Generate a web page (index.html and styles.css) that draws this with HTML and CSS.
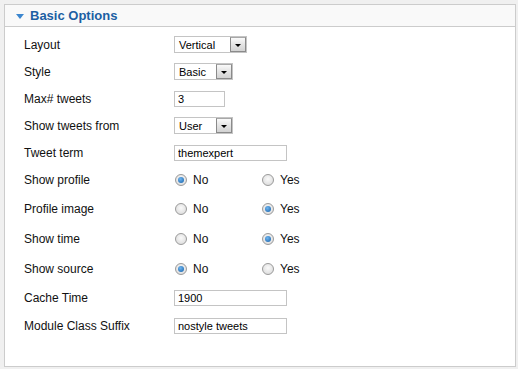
FILE: index.html
```html
<!DOCTYPE html>
<html>
<head>
<meta name="viewport" content="width=device-width, initial-scale=1">
<link rel="stylesheet" href="styles.css">
</head>
<body>

<div class="panel">
  <div class="panel-head">
    <span class="toggle"></span>
    <h3>Basic Options</h3>
  </div>

  <div class="options">
    <div class="row">
      <label>Layout</label>
      <div class="select w73"><span>Vertical</span><span class="btn"></span></div>
    </div>
    <div class="row">
      <label>Style</label>
      <div class="select w59"><span>Basic</span><span class="btn"></span></div>
    </div>
    <div class="row">
      <label>Max# tweets</label>
      <input type="text" class="short" value="3">
    </div>
    <div class="row">
      <label>Show tweets from</label>
      <div class="select w59"><span>User</span><span class="btn"></span></div>
    </div>
    <div class="row">
      <label>Tweet term</label>
      <input type="text" value="themexpert">
    </div>
    <div class="row radios first">
      <label>Show profile</label>
      <span class="radio checked"></span><span class="opt">No</span>
      <span class="radio"></span><span class="opt">Yes</span>
    </div>
    <div class="row radios">
      <label>Profile image</label>
      <span class="radio"></span><span class="opt">No</span>
      <span class="radio checked"></span><span class="opt">Yes</span>
    </div>
    <div class="row radios">
      <label>Show time</label>
      <span class="radio"></span><span class="opt">No</span>
      <span class="radio checked"></span><span class="opt">Yes</span>
    </div>
    <div class="row radios">
      <label>Show source</label>
      <span class="radio checked"></span><span class="opt">No</span>
      <span class="radio"></span><span class="opt">Yes</span>
    </div>
    <div class="row after-radios">
      <label>Cache Time</label>
      <input type="text" value="1900">
    </div>
    <div class="row">
      <label>Module Class Suffix</label>
      <input type="text" value="nostyle tweets">
    </div>
  </div>
</div>

</body>
</html>
```

FILE: styles.css
```css
body {
  margin: 0;
  padding: 4px 2px 2px 4px;
  background: #f0f0f0;
  font-family: "Liberation Sans", Arial, sans-serif;
}

.panel {
  background: #fff;
  border: 1px solid #ccc;
  height: 363px;
  box-sizing: border-box;
}

.panel-head {
  display: flex;
  align-items: center;
  height: 21px;
  background: #f9f9f9;
  border-bottom: 1px solid #ccc;
  padding-left: 11px;
}

.toggle {
  width: 0;
  height: 0;
  border-left: 4px solid transparent;
  border-right: 4px solid transparent;
  border-top: 5px solid #3b86cf;
  margin-right: 6px;
  margin-top: 1px;
}

.panel-head h3 {
  margin: 0;
  font-size: 13px;
  font-weight: bold;
  color: #1c5fa3;
}

.options {
  padding: 4px 0 0 19px;
}

.row {
  display: flex;
  align-items: center;
  height: 27px;
  font-size: 12px;
  color: #111;
}

.row.radios {
  height: 30px;
}

.row.radios.first {
  height: 28px;
}

.row.after-radios {
  height: 28px;
}

.row label {
  width: 150px;
  flex: none;
}

.select {
  display: flex;
  align-items: center;
  justify-content: space-between;
  height: 17px;
  box-sizing: border-box;
  border: 1px solid #c4c4c4;
  padding: 0 0 0 4px;
  font-size: 11px;
  color: #000;
}

.w73 { width: 73px; }
.w59 { width: 59px; }

.select .btn {
  width: 16px;
  height: 15px;
  box-sizing: border-box;
  border: 1px solid #8a8a8a;
  border-top-color: #a8a8a8;
  background: linear-gradient(#fafafa, #e8e8e8 40%, #d2d2d2);
  position: relative;
}

.select .btn::after {
  content: "";
  position: absolute;
  left: 4px;
  top: 6px;
  border-left: 3px solid transparent;
  border-right: 3px solid transparent;
  border-top: 3px solid #000;
}

input[type=text] {
  width: 113px;
  height: 16px;
  box-sizing: border-box;
  border: 1px solid #c4c4c4;
  padding: 0 0 0 3px;
  margin: 0;
  font-family: "Liberation Sans", Arial, sans-serif;
  font-size: 11px;
  color: #000;
}

input.short {
  width: 51px;
}

.radio {
  width: 12px;
  height: 12px;
  box-sizing: border-box;
  border-radius: 50%;
  border: 1px solid #9a9a9a;
  background: radial-gradient(circle at 50% 40%, #fafafa, #d6d6d6);
  margin-left: 1px;
  flex: none;
  position: relative;
}

.radio.checked::after {
  content: "";
  position: absolute;
  left: 2px;
  top: 2px;
  width: 6px;
  height: 6px;
  border-radius: 50%;
  background: radial-gradient(circle at 40% 35%, #6fb5ef, #145fa8);
}

.opt {
  margin-left: 6px;
  width: 68px;
}
```
